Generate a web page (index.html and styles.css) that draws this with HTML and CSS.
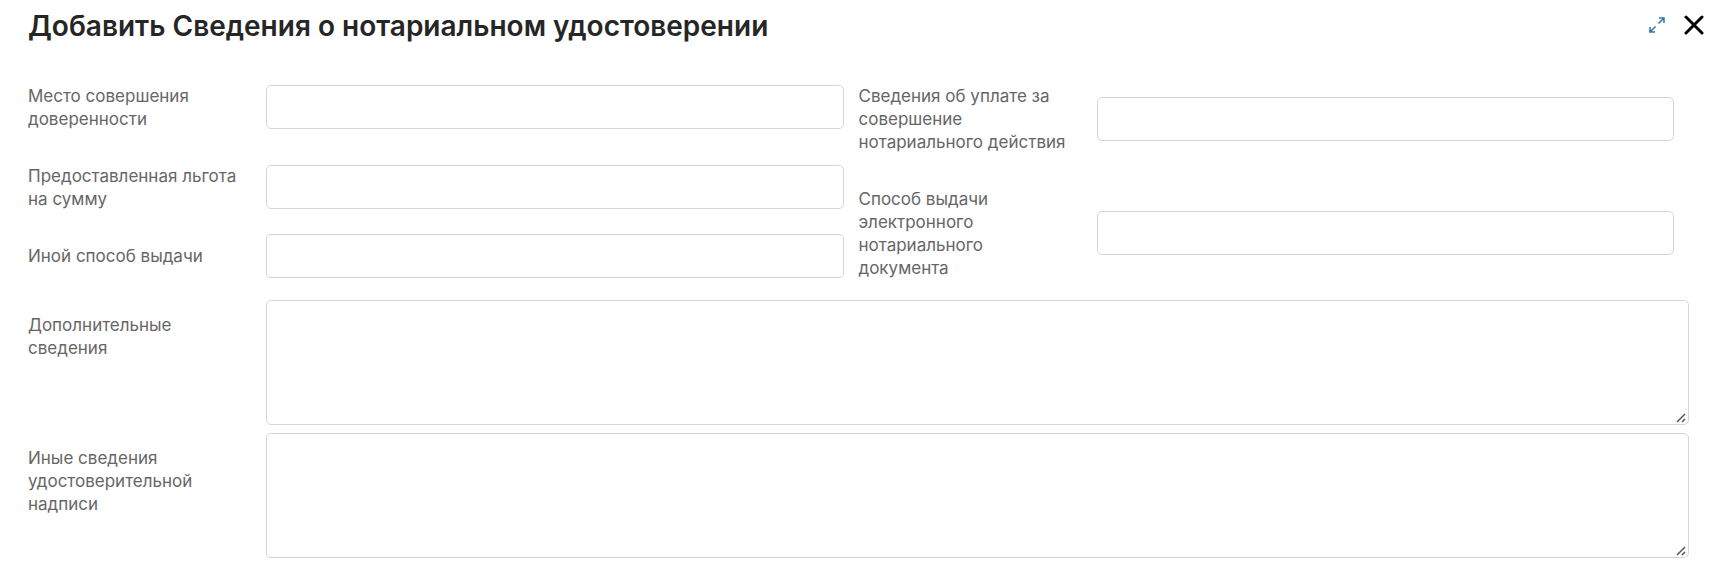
FILE: index.html
```
<!DOCTYPE html>
<html lang="ru">

<head>
    <meta charset="UTF-8">
    <meta name="viewport" content="width=device-width, initial-scale=1.0">
    <title>Добавить Сведения о нотариальном удостоверении</title>
    <link rel="stylesheet" href="styles.css">
</head>

<body>

    <header class="header">
        <h1>Добавить Сведения о нотариальном удостоверении</h1>
        <div class="actions">
            <button type="button" class="icon-btn" aria-label="Развернуть">
                <svg class="expand-icon" width="16" height="16" viewBox="0 0 16 16">
                    <path d="M10 1h5v5M15 1L9.500 6.500M1 10v5h5M1 15l5.500-5.500" />
                </svg>
            </button>
            <button type="button" class="icon-btn" aria-label="Закрыть">
                <svg class="close-icon" width="20" height="20" viewBox="0 0 20 20">
                    <path d="M2 2l16 16M18 2L2 18" />
                </svg>
            </button>
        </div>
    </header>

    <form class="form">
        <div class="columns">
            <div class="column">
                <div class="field">
                    <label for="place">Место совершения доверенности</label>
                    <input type="text" id="place">
                </div>
                <div class="field">
                    <label for="benefit">Предоставленная льгота на сумму</label>
                    <input type="text" id="benefit">
                </div>
                <div class="field">
                    <label for="otherMethod">Иной способ выдачи</label>
                    <input type="text" id="otherMethod">
                </div>
            </div>
            <div class="column">
                <div class="field">
                    <label for="payment">Сведения об уплате за совершение нотариального действия</label>
                    <input type="text" id="payment">
                </div>
                <div class="field">
                    <label for="method">Способ выдачи электронного нотариального документа</label>
                    <input type="text" id="method">
                </div>
            </div>
        </div>

        <div class="field field-wide">
            <label for="extra">Дополнительные сведения</label>
            <textarea id="extra"></textarea>
        </div>
        <div class="field field-wide">
            <label for="inscription">Иные сведения удостоверительной надписи</label>
            <textarea id="inscription"></textarea>
        </div>
    </form>

</body>

</html>
```

FILE: styles.css
```
* {
    box-sizing: border-box;
}

body {
    font-family: Inter, 'Liberation Sans', sans-serif;
    background-color: #fff;
    color: #666;
    margin: 0;
}

.header {
    display: flex;
    justify-content: space-between;
    align-items: center;
    padding: 6px 9px 0 28px;
}

h1 {
    color: #262626;
    font-size: 28px;
    font-weight: 600;
    line-height: 36px;
    margin: 0;
    padding-top: 2px;
}

.actions {
    display: flex;
    align-items: center;
    gap: 19px;
}

.icon-btn {
    display: flex;
    padding: 0;
    border: none;
    background: none;
    cursor: pointer;
}

.icon-btn svg {
    fill: none;
}

.expand-icon {
    stroke: #2f74ab;
    stroke-width: 1.5;
}

.close-icon {
    stroke: #000;
    stroke-width: 3;
    stroke-linecap: round;
}

.form {
    display: flex;
    flex-direction: column;
    gap: 8px;
    padding: 28px 24px 8px 28px;
}

.columns {
    display: grid;
    grid-template-columns: 1fr 1fr;
    padding-bottom: 1px;
}

.column {
    display: flex;
    flex-direction: column;
    gap: 10px;
    padding-right: 15px;
}

.field {
    display: flex;
    align-items: center;
}

.field-wide {
    align-items: flex-start;
}

label {
    flex: 0 0 238px;
    padding: 13px 24px 11px 0;
    font-size: 17px;
    line-height: 23px;
}

input,
textarea {
    flex: 1;
    min-width: 0;
    border: 1px solid #d6d6d6;
    border-radius: 5px;
    background-color: #fff;
    font-family: inherit;
    font-size: 17px;
    padding: 8px 12px;
}

input {
    height: 44px;
}

textarea {
    height: 125px;
    resize: vertical;
}

textarea::-webkit-resizer {
    background: url("data:image/svg+xml,%3Csvg xmlns='http://www.w3.org/2000/svg' width='15' height='15' viewBox='0 0 15 15'%3E%3Cpath d='M4 13l8-8M9 13l3-3' stroke='%23555' stroke-width='1.500'/%3E%3C/svg%3E") no-repeat right bottom;
}

.field-wide label {
    padding-top: 14px;
}

input:focus,
textarea:focus {
    border-color: #2f74ab;
    outline: none;
}
```
